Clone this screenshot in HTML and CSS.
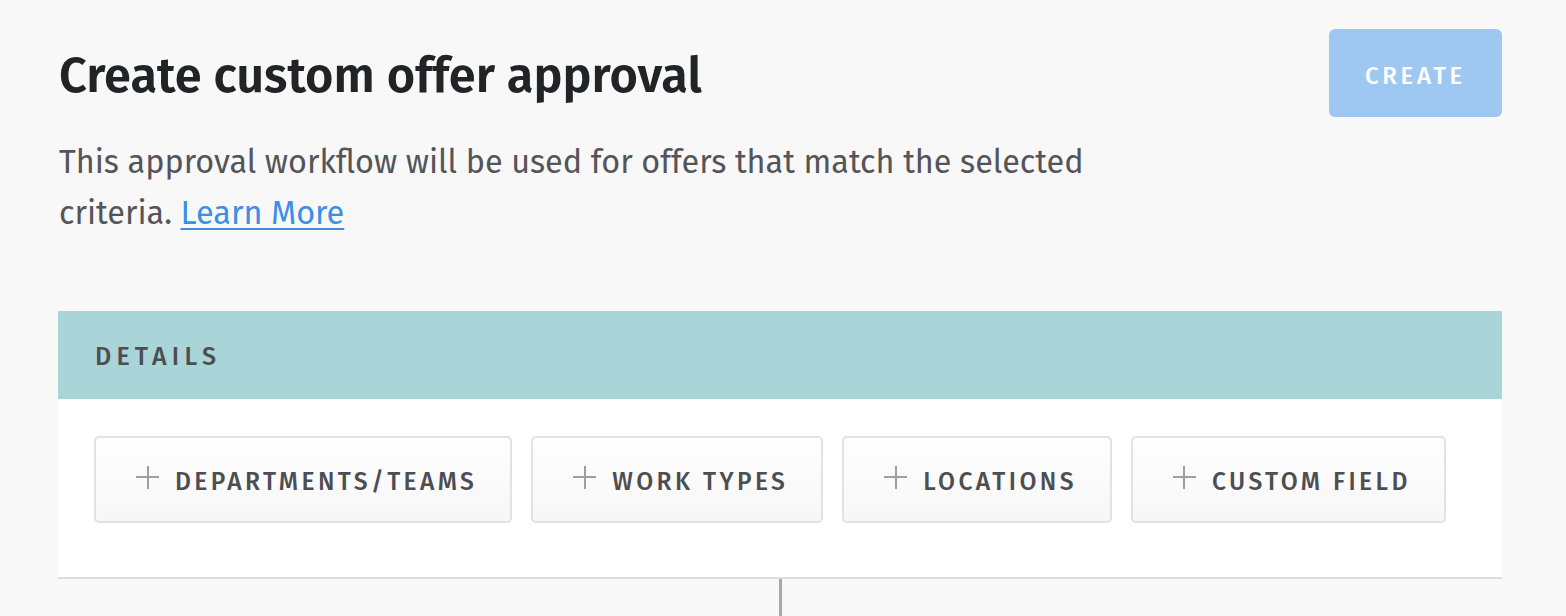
FILE: index.html
```html
<!DOCTYPE html>
<html lang="en">
<head>
  <meta charset="UTF-8" />
  <meta name="viewport" content="width=device-width, initial-scale=1.0" />
  <title>Create custom offer approval</title>
  <link rel="stylesheet" href="styles.css">
</head>
<body>
  <div class="page">
    <div class="header">
      <div class="intro">
        <h1>Create custom offer approval</h1>
        <p class="description">
          This approval workflow will be used for offers that match the selected
          criteria. <a href="#">Learn More</a>
        </p>
      </div>
      <button class="create-btn" disabled>Create</button>
    </div>

    <div class="panel">
      <div class="panel-title">Details</div>
      <div class="panel-body">
        <button class="criteria-btn"><span class="plus"></span>Departments/Teams</button>
        <button class="criteria-btn"><span class="plus"></span>Work Types</button>
        <button class="criteria-btn"><span class="plus"></span>Locations</button>
        <button class="criteria-btn"><span class="plus"></span>Custom Field</button>
      </div>
    </div>

    <div class="connector"></div>
  </div>
</body>
</html>
```

FILE: styles.css
```css
body {
  margin: 0;
  background: #f8f8f8;
  font-family: "Fira Sans", Lato, "Liberation Sans", sans-serif;
  color: #545459;
}
.page {
  padding: 29px 64px 0 58px;
}
.header {
  display: flex;
  justify-content: space-between;
  align-items: flex-start;
  height: 282px;
}
h1 {
  margin: 17px 0 0 1px;
  font-size: 48.7px;
  line-height: 60px;
  font-weight: 600;
  color: #222326;
}
.description {
  margin: 31px 0 0 1px;
  max-width: 1090px;
  font-size: 32.4px;
  line-height: 51px;
}
.description a {
  color: #3b8fe6;
  text-decoration: underline;
  text-underline-offset: 4px;
  text-decoration-thickness: 2px;
}
.create-btn {
  width: 173px;
  height: 88px;
  padding-top: 7px;
  border: none;
  border-radius: 6px;
  background: #9ec7f2;
  color: #fff;
  font-family: inherit;
  font-size: 24px;
  font-weight: 500;
  letter-spacing: 3.6px;
  text-transform: uppercase;
}
.panel {
  background: #fff;
  border-bottom: 2px solid #dcdcdc;
}
.panel-title {
  height: 88px;
  display: flex;
  align-items: center;
  padding: 4px 0 0 37px;
  box-sizing: border-box;
  background: #aad5d8;
  color: #4d4e52;
  font-size: 25px;
  font-weight: 500;
  letter-spacing: 5.2px;
  text-transform: uppercase;
}
.panel-body {
  display: flex;
  gap: 19px;
  padding: 37px 36px 54px;
}
.criteria-btn {
  flex: none;
  display: flex;
  align-items: center;
  height: 87px;
  padding: 4px 33px 0 40px;
  border: 2px solid #e2e2e2;
  border-radius: 5px;
  background: linear-gradient(#fefefe, #f7f7f7);
  color: #4d4e52;
  font-family: inherit;
  font-size: 24.6px;
  font-weight: 500;
  letter-spacing: 3.4px;
  white-space: nowrap;
  text-transform: uppercase;
}
.plus {
  position: relative;
  width: 23px;
  height: 23px;
  margin-right: 16px;
  margin-top: -9px;
}
.plus::before,
.plus::after {
  content: "";
  position: absolute;
  background: #9e9e9e;
}
.plus::before {
  left: 0;
  right: 0;
  top: 10.5px;
  height: 2px;
}
.plus::after {
  top: 0;
  bottom: 0;
  left: 10.5px;
  width: 2px;
}
.connector {
  width: 3px;
  height: 40px;
  margin: 0 auto;
  background: #a8a8a8;
}
```
